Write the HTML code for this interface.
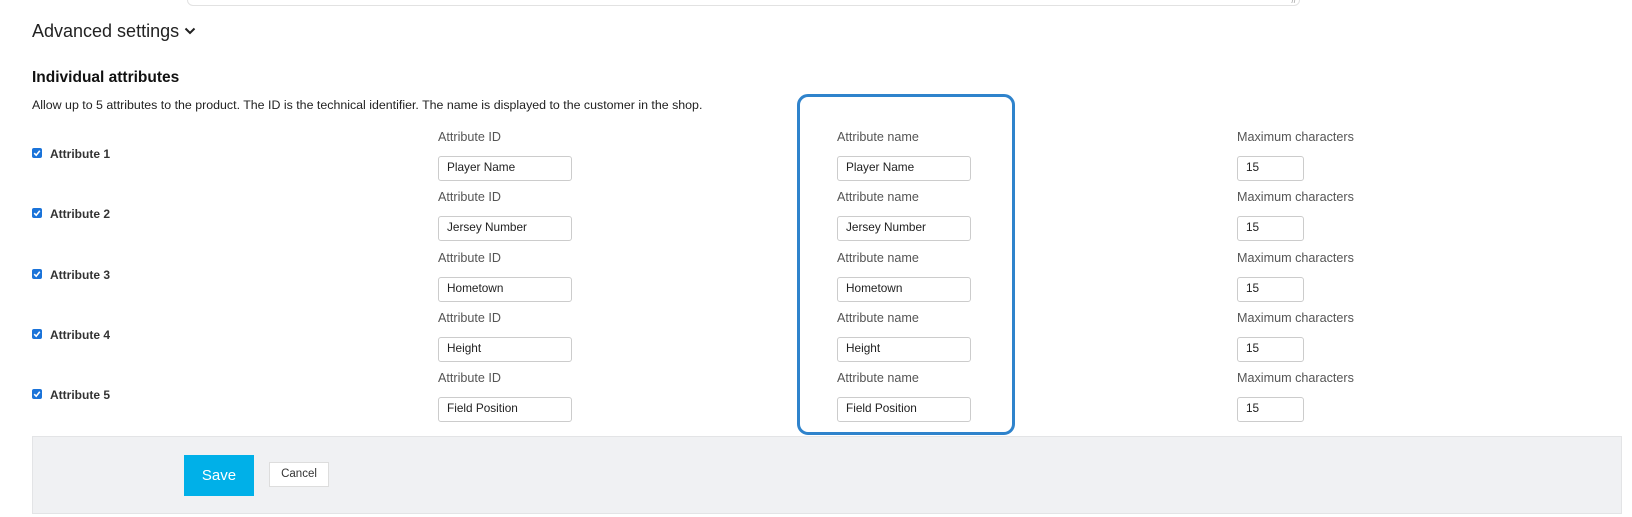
<!DOCTYPE html>
<html><head><meta charset="utf-8"><style>
*{box-sizing:border-box;margin:0;padding:0}
body{width:1632px;height:517px;background:#fff;font-family:"Liberation Sans",sans-serif;color:#222;position:relative;overflow:hidden}
.a{position:absolute}
.ta{left:187px;top:-10px;width:1113px;height:16px;border:1px solid #e2e2e2;border-radius:0 0 6px 6px;}
.lbl{font-size:12.6px;color:#555;}
.inp{width:134px;height:25px;border:1px solid #ccc;border-radius:3px;font-size:11.8px;color:#222;padding-left:8px;line-height:21px;}
.cb{width:10px;height:10px;background:#1a73d9;border-radius:2px}
.cb svg{display:block}
.cl{font-size:12px;font-weight:bold;color:#333}
</style></head><body>
<div class="a ta"><span style="position:absolute;right:3px;bottom:0;font-size:8px;color:#999">//</span></div>
<div class="a" style="left:32px;top:21px;font-size:18px;color:#222">Advanced settings <svg width="12" height="10" viewBox="0 0 12 10" style="vertical-align:1px"><path d="M1.5 2.5L6 7 10.5 2.5" fill="none" stroke="#222" stroke-width="2"/></svg></div>
<div class="a" style="left:32px;top:69px;font-size:15.5px;font-weight:bold;color:#111">Individual attributes</div>
<div class="a" style="left:32px;top:98px;font-size:12.4px;color:#222">Allow up to 5 attributes to the product. The ID is the technical identifier. The name is displayed to the customer in the shop.</div>
<div class="a" style="left:797px;top:94px;width:218px;height:341px;border:3px solid #2f83cc;border-radius:11px"></div>

<div id="rows"></div>
<script>
var vals=["Player Name","Jersey Number","Hometown","Height","Field Position"],h="";
for(var i=0;i<5;i++){var y=156+i*60.25;
h+='<div class="a cb" style="left:32px;top:'+(y-8)+'px"><svg width="10" height="10" viewBox="0 0 10 10"><path d="M2.2 5.2L4.2 7.2 7.8 2.8" fill="none" stroke="#fff" stroke-width="1.6"/></svg></div>';
h+='<div class="a cl" style="left:50px;top:'+(y-9)+'px">Attribute '+(i+1)+'</div>';
h+='<div class="a lbl" style="left:438px;top:'+(y-26)+'px">Attribute ID</div>';
h+='<div class="a inp" style="left:438px;top:'+y+'px">'+vals[i]+'</div>';
h+='<div class="a lbl" style="left:837px;top:'+(y-26)+'px">Attribute name</div>';
h+='<div class="a inp" style="left:837px;top:'+y+'px">'+vals[i]+'</div>';
h+='<div class="a lbl" style="left:1237px;top:'+(y-26)+'px">Maximum characters</div>';
h+='<div class="a inp" style="left:1237px;top:'+y+'px;width:67px">15</div>';}
document.getElementById("rows").innerHTML=h;
</script>
<div class="a" style="left:32px;top:436px;width:1590px;height:78px;background:#f0f1f3;border:1px solid #e3e4e6"></div>
<div class="a" style="left:184px;top:455px;width:70px;height:41px;background:#00b0e8;color:#fff;font-size:15px;text-align:center;line-height:41px">Save</div>
<div class="a" style="left:269px;top:462px;width:60px;height:25px;background:#fff;border:1px solid #ddd;color:#333;font-size:11.5px;text-align:center;line-height:23px">Cancel</div>
</body></html>
